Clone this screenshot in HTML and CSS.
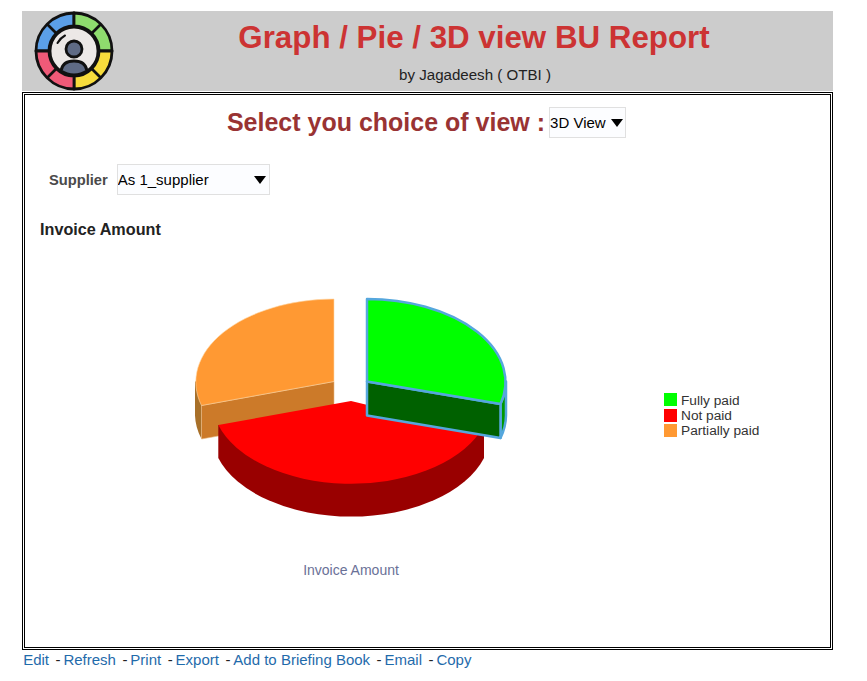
FILE: index.html
```html
<!DOCTYPE html>
<html lang="en">
<head>
<meta charset="utf-8">
<title>Graph / Pie / 3D view BU Report</title>
<link rel="stylesheet" href="styles.css">
</head>
<body>
<header class="banner">
  <div class="logo-cell">
    <svg class="logo" width="82" height="82" viewBox="0 0 82 82">
      <g stroke="#111" stroke-width="2.800" stroke-linejoin="round">
        <path fill="#5b9fe8" d="M41 3A38 38 0 0 0 3 41H16A25 25 0 0 1 41 16Z"/>
        <path fill="#8fdc6e" d="M41 3A38 38 0 0 1 79 41H66A25 25 0 0 0 41 16Z"/>
        <path fill="#f7dc3c" d="M79 41A38 38 0 0 1 41 79V66A25 25 0 0 0 66 41Z"/>
        <path fill="#ef5a78" d="M41 79A38 38 0 0 1 3 41H16A25 25 0 0 0 41 66Z"/>
        <path fill="none" d="M14 14L24 24M68 14L58 24M14 68L24 58M68 68L58 58"/>
        <circle cx="41" cy="41" r="24" fill="#ece8e6"/>
        <path fill="#5f6b85" d="M28 61C29 54 34 51 41 51C48 51 53 54 54 61A24 24 0 0 1 28 61Z"/>
        <circle cx="41" cy="39" r="8" fill="#5f6b85"/>
      </g>
      <path fill="none" stroke="#111" stroke-width="2" stroke-linecap="round" d="M24.500 33A18 18 0 0 1 32 25.500"/>
    </svg>
  </div>
  <div class="banner-text">
    <h1 class="title">Graph / Pie / 3D view BU Report</h1>
    <p class="byline">by Jagadeesh ( OTBI )</p>
  </div>
</header>

<main class="frame">
  <div class="view-row">
    <h2 class="view-heading">Select you choice of view :</h2>
    <div class="picker picker-view">
      <select class="picker-input" aria-label="View">
        <option>3D View</option>
      </select>
    </div>
  </div>

  <div class="prompt-row">
    <label class="prompt-label" for="supplier">Supplier</label>
    <div class="picker picker-supplier">
      <select class="picker-input" id="supplier">
        <option>As 1_supplier</option>
      </select>
    </div>
  </div>

  <h3 class="chart-title">Invoice Amount</h3>

  <svg class="chart" width="805" height="400" viewBox="0 0 805 400">
    <g transform="translate(-25 -234)">
      <!-- orange slice -->
      <path fill="#a87029" d="M334 376.500H195V410.500A139 83 0 0 0 201.500 434L201.500 400.500Z"/>
      <path fill="#cc7a29" stroke="#e8b883" stroke-width=".6" d="M201.500 400.500L334 376.500V410.500L201.500 434Z"/>
      <path fill="#ff9933" stroke="#ffd9a8" stroke-width=".6" d="M334 376.500V294A139 83 0 0 0 201.500 400.500Z"/>
      <!-- red slice -->
      <path fill="#990000" d="M218.300 420V453A139 83 0 0 0 484 453V420Z"/>
      <path fill="#ff0000" d="M351 396L218.300 420A139 83 0 0 0 480 427Z"/>
      <!-- green slice, selected -->
      <g stroke="#55a7dd" stroke-width="2.500" stroke-linejoin="round">
        <path fill="#009900" d="M500.500 399A139 83 0 0 0 506 376.500V410.500A139 83 0 0 1 500.500 433Z"/>
        <path fill="#006100" d="M367 376.500L500.500 399V433L367 410.500Z"/>
        <path fill="#00ff00" d="M367 376.500V294A139 83 0 0 1 500.500 399Z"/>
      </g>
      <text class="axis-label" x="351" y="570" text-anchor="middle">Invoice Amount</text>
      <rect x="664" y="388" width="13" height="13" fill="#00ff00"/>
      <rect x="664" y="404" width="13" height="13" fill="#ff0000"/>
      <rect x="664" y="419" width="13" height="13" fill="#ff9933"/>
      <text class="legend-label" x="681" y="400">Fully paid</text>
      <text class="legend-label" x="681" y="415">Not paid</text>
      <text class="legend-label" x="681" y="430">Partially paid</text>
    </g>
  </svg>
</main>

<nav class="links">
  <a href="#">Edit</a><span class="sep">-</span><a href="#">Refresh</a><span class="sep">-</span><a href="#">Print</a><span class="sep">-</span><a href="#">Export</a><span class="sep">-</span><a href="#">Add to Briefing Book</a><span class="sep">-</span><a href="#">Email</a><span class="sep">-</span><a href="#">Copy</a>
</nav>
</body>
</html>
```
FILE: styles.css
```css
* { box-sizing: border-box; }

html, body { height: 100%; }

body {
  margin: 0;
  padding: 11px 34px 0 22px;
  background: #fff;
  font-family: "Liberation Sans", Arial, sans-serif;
  overflow: hidden;
}

.banner {
  display: flex;
  height: 80px;
  background: #cccccc;
}

.logo-cell {
  flex: 0 0 92px;
  padding: 0 0 0 11px;
  display: flex;
  align-items: center;
}

.logo { display: block; }

.banner-text {
  flex: 1;
  text-align: center;
}

.title {
  margin: 8px 0 0;
  font-size: 31.300px;
  line-height: 38px;
  font-weight: bold;
  color: #cc3333;
}

.byline {
  margin: 9px 0 0;
  padding-left: 2px;
  font-size: 15.100px;
  line-height: 17px;
  color: #222;
}

.frame {
  margin-top: 1px;
  height: 558px;
  border: 3px double #000;
  background: #fff;
  overflow: hidden;
}

.view-row {
  display: flex;
  justify-content: center;
  align-items: center;
  gap: 4px;
  margin-top: 12px;
  padding-right: 2px;
  height: 31px;
}

.view-heading {
  margin: 0;
  font-size: 25px;
  font-weight: bold;
  color: #993333;
}

.picker {
  position: relative;
  height: 31px;
  background: #fcfdff;
  border: 1px solid #e0e0e0;
}

.picker::after {
  content: "";
  position: absolute;
  right: 2px;
  top: 11px;
  border-left: 6.500px solid transparent;
  border-right: 6.500px solid transparent;
  border-top: 8px solid #000;
  pointer-events: none;
}

.picker-view { width: 77px; }

.picker-supplier { width: 153px; }

.picker-supplier::after { right: 3px; }

.picker-input {
  appearance: none;
  display: block;
  width: 100%;
  height: 100%;
  margin: 0;
  padding: 0;
  border: 0;
  background: transparent;
  font-family: inherit;
  font-size: 15px;
  color: #000;
}

.prompt-row {
  display: flex;
  align-items: center;
  gap: 9px;
  margin: 26px 0 0 24px;
}

.prompt-label {
  font-size: 14.700px;
  font-weight: bold;
  color: #4a4a4a;
}

.chart-title {
  margin: 25px 0 0 15px;
  font-size: 16.200px;
  line-height: 19px;
  font-weight: bold;
  color: #222;
}

.chart { display: block; }

.axis-label {
  font-family: "Liberation Sans", Arial, sans-serif;
  font-size: 14px;
  fill: #6a7197;
}

.legend-label {
  font-family: "Liberation Sans", Arial, sans-serif;
  font-size: 13.700px;
  fill: #333;
}

.links {
  margin: 1px 0 0 1.200px;
  font-size: 15px;
  line-height: 18px;
}

.links a {
  color: #1f6bab;
  text-decoration: none;
}

.sep {
  margin: 0 2.900px 0 6.500px;
  color: #222;
}
```
